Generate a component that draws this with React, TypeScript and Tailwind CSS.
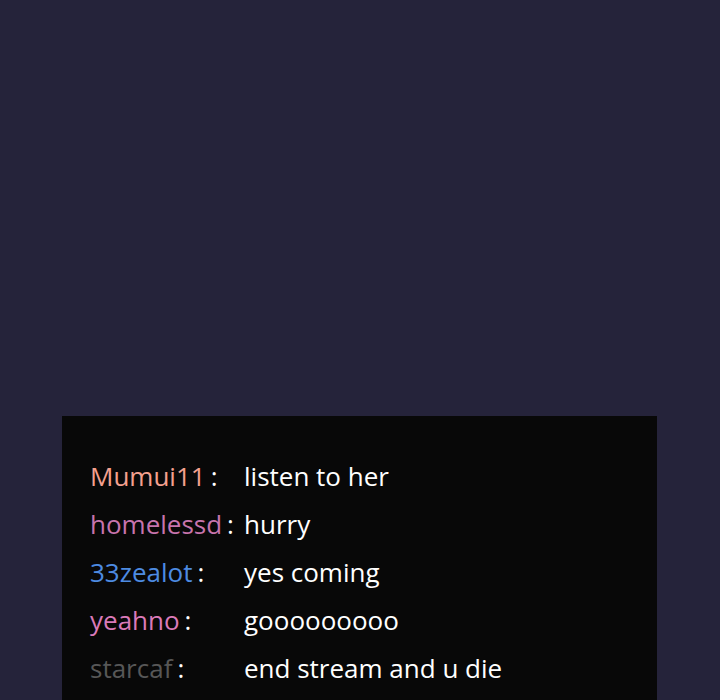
const messages = [
  { user: 'Mumui11', color: 'text-[#f4a08e]', text: 'listen to her' },
  { user: 'homelessd', color: 'text-[#c774ad]', text: 'hurry' },
  { user: '33zealot', color: 'text-[#4d8be2]', text: 'yes coming' },
  { user: 'yeahno', color: 'text-[#da7ab9]', text: 'gooooooooo' },
  { user: 'starcaf', color: 'text-[#575757]', text: 'end stream and u die' },
];

export default function App() {
  return (
    <div className="h-[700px] overflow-hidden bg-[#25233a]" style={{ fontFamily: '"Open Sans", "DejaVu Sans", sans-serif' }}>
      {/* stream area */}
      <div className="h-[416px]" />

      {/* chat */}
      <div className="ml-[62px] mr-[63px] h-[284px] bg-[#080808] pl-[28px] pt-[36px]">
        {messages.map((m, i) => (
          <div key={i} className="grid h-[48px] grid-cols-[154px_1fr] items-center text-[26px] leading-none">
            <div className="flex items-center">
              <span className={m.color}>{m.user}</span>
              <span className="ml-[5px] text-white">:</span>
            </div>
            <div className="text-white">{m.text}</div>
          </div>
        ))}
      </div>
    </div>
  );
}
